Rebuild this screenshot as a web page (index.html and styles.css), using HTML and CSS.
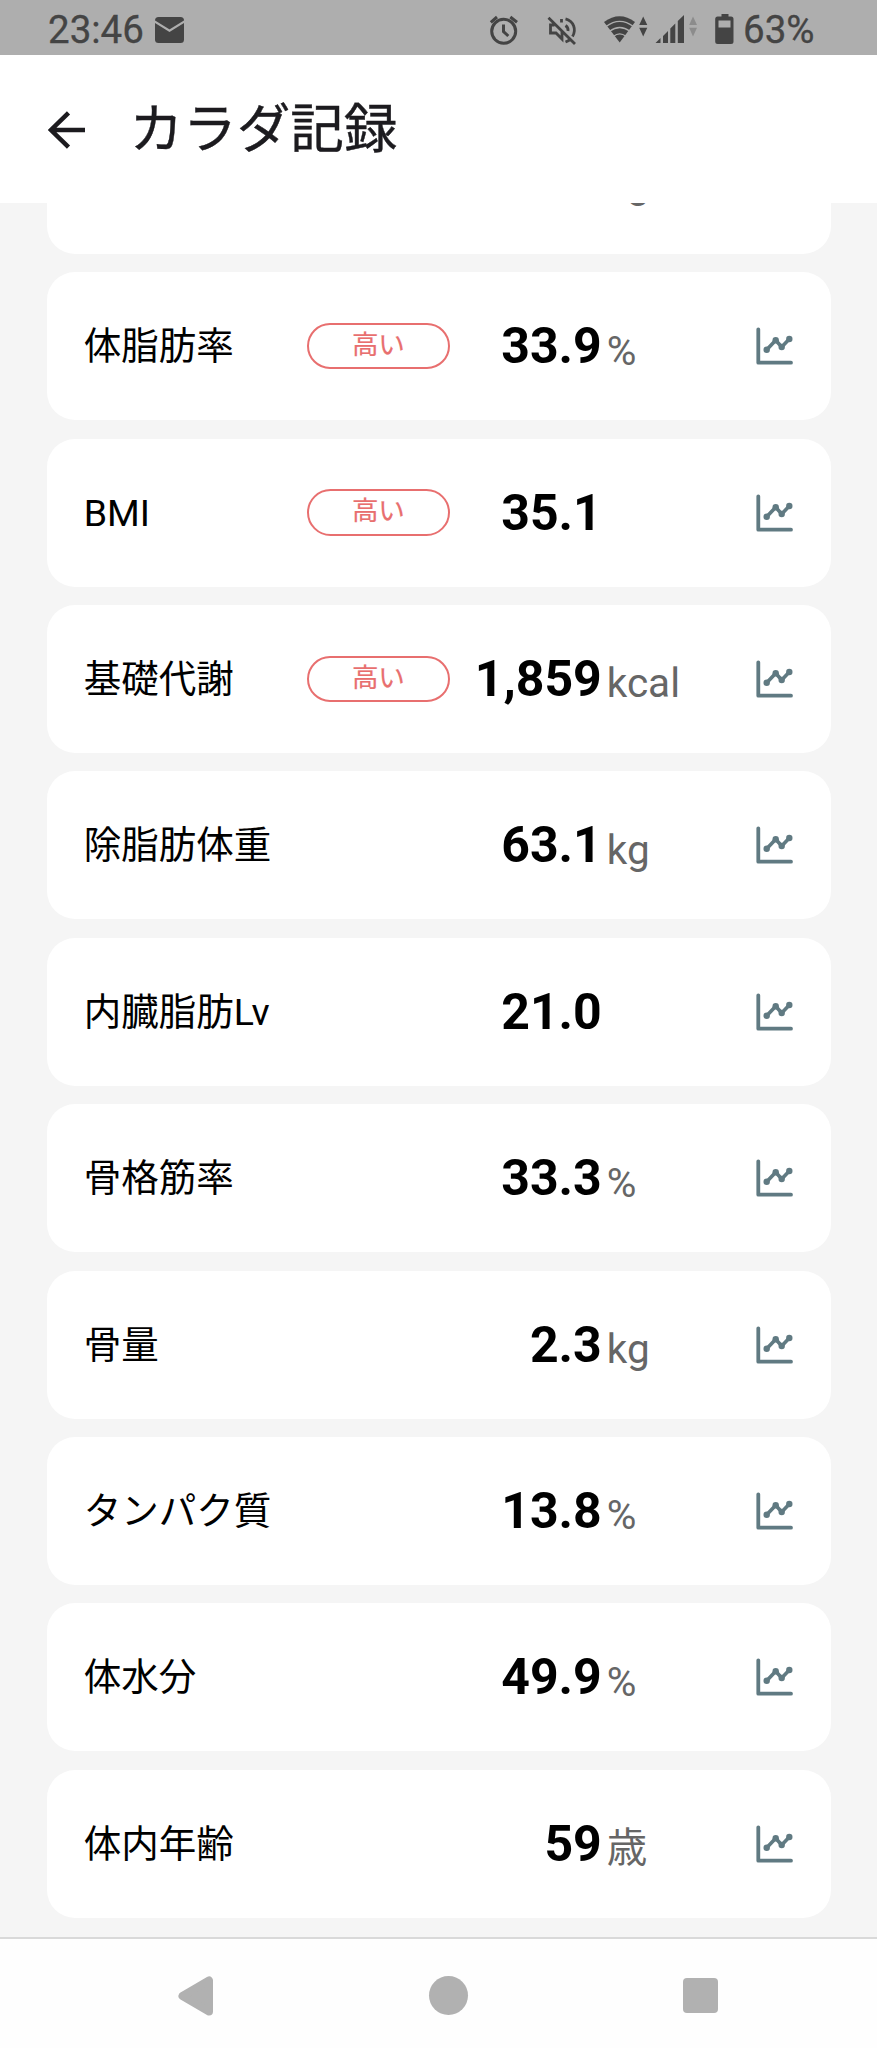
FILE: index.html
```html
<!DOCTYPE html>
<html lang="ja">
<head>
<meta charset="utf-8">
<title>カラダ記録</title>
<link rel="stylesheet" href="styles.css">
</head>
<body>
<svg class="defs" width="0" height="0" aria-hidden="true">
  <symbol id="chart" viewBox="0 0 38 38">
    <g fill="none" stroke="currentColor" stroke-linecap="round" stroke-linejoin="round">
      <path stroke-width="3.8" d="M2.300 2.300V35.700H35"/>
      <path stroke-width="3.600" d="M10.700 22.800 19.700 13.200 25.700 20 33.300 12"/>
    </g>
    <g fill="currentColor"><circle cx="10.700" cy="22.800" r="3.200"/><circle cx="19.700" cy="13.200" r="3.200"/><circle cx="25.700" cy="20" r="3.200"/><circle cx="33.300" cy="12" r="3.200"/></g>
  </symbol>
</svg>
<div class="screen">
  <div class="status">
    <span class="clock">23:46</span>
    <svg class="mail" width="29" height="26" viewBox="0 0 29 26"><rect width="29" height="26" rx="3.500" fill="#444"/><path d="M-.5 4.500 14.500 13.700 29.500 4.500" fill="none" stroke="#aeaeae" stroke-width="2.200"/></svg>
    <svg class="tray" width="246" height="34" viewBox="0 0 246 34" fill="#444">
      <g fill="none" stroke="#444" stroke-width="3">
        <circle cx="15.700" cy="18.300" r="12"/>
        <path d="M15.500 11.500V18.500L20.300 23M2.800 9.300 9 4M22.300 4 29 9.300"/>
        <path stroke-width="2.800" d="M60.500 4.800 87 31M66.500 12H62.500V20H68L74 26V18.500M73.500 6V9.500M77.500 12.500Q80.500 14.500 80 18M77.500 5.800C86 8 88.500 17 84.500 23.500M77.500 29Q80 28 81.500 27"/>
      </g>
      <g>
        <path d="M116 9Q131.700-2.500 147 9L131.700 29.500Z"/>
        <g fill="none" stroke="#aeaeae" stroke-width="1.300"><path d="M118 13.600Q131.700 3 145.500 13.600M121.500 18.300Q131.700 10.700 142 18.300M125.500 23.200Q131.700 18.400 138 23.200"/></g>
        <path d="M151.200 12 155.200 3.500 159.300 12ZM151.200 14.800H159.300L155.200 23.500Z"/>
        <path d="M167.500 30 172.500 25V30ZM175 23 180 18V30H175ZM182.300 15.500 187.300 10.500V30H182.300ZM189.800 8 196 2V30H189.800Z"/>
        <path fill="#8c8c8c" d="M201.200 12 205 3.500 209 12ZM201.200 14.800H209L205 23.500Z"/>
      </g>
      <path fill-rule="evenodd" d="M233.500 1H240.500V3.500H243Q245.500 3.500 245.500 6V28.500Q245.500 31 243 31H229.700Q227.200 31 227.200 28.500V6Q227.200 3.500 229.700 3.500H233.500ZM230.500 7.500V14.500H242.500V7.500Z"/>
    </svg>
    <span class="battery">63%</span>
  </div>
  <header class="bar">
    <svg class="back" width="38" height="38" viewBox="0 0 38 38" fill="none" stroke="#1c1b1f" stroke-width="4.500"><path d="M37 19H3M20.500 1.800 3 19 20.500 36.200"/></svg>
    <h1 class="title">カラダ記録</h1>
  </header>
  <main class="list">
    <section class="card"><span class="name"></span><span></span><span class="value"></span><span class="unit">kg</span></section>
    <section class="card"><span class="name">体脂肪率</span><span class="tag">高い</span><span class="value">33.9</span><span class="unit">%</span><svg class="chart"><use href="#chart"/></svg></section>
    <section class="card"><span class="name">BMI</span><span class="tag">高い</span><span class="value">35.1</span><span class="unit"></span><svg class="chart"><use href="#chart"/></svg></section>
    <section class="card"><span class="name">基礎代謝</span><span class="tag">高い</span><span class="value">1,859</span><span class="unit">kcal</span><svg class="chart"><use href="#chart"/></svg></section>
    <section class="card"><span class="name">除脂肪体重</span><span></span><span class="value">63.1</span><span class="unit">kg</span><svg class="chart"><use href="#chart"/></svg></section>
    <section class="card"><span class="name">内臓脂肪Lv</span><span></span><span class="value">21.0</span><span class="unit"></span><svg class="chart"><use href="#chart"/></svg></section>
    <section class="card"><span class="name">骨格筋率</span><span></span><span class="value">33.3</span><span class="unit">%</span><svg class="chart"><use href="#chart"/></svg></section>
    <section class="card"><span class="name">骨量</span><span></span><span class="value">2.3</span><span class="unit">kg</span><svg class="chart"><use href="#chart"/></svg></section>
    <section class="card"><span class="name">タンパク質</span><span></span><span class="value">13.8</span><span class="unit">%</span><svg class="chart"><use href="#chart"/></svg></section>
    <section class="card"><span class="name">体水分</span><span></span><span class="value">49.9</span><span class="unit">%</span><svg class="chart"><use href="#chart"/></svg></section>
    <section class="card"><span class="name">体内年齢</span><span></span><span class="value">59</span><span class="unit">歳</span><svg class="chart"><use href="#chart"/></svg></section>
  </main>
  <nav class="nav">
    <svg width="36" height="40" viewBox="0 0 36 40"><path d="M4.500 20 31 4.500V35.500Z" fill="#b1b1b1" stroke="#b1b1b1" stroke-width="8" stroke-linejoin="round"/></svg>
    <span class="home"></span>
    <span class="recent"></span>
  </nav>
</div>
</body>
</html>
```
FILE: styles.css
```css
* { box-sizing: border-box; }
body { margin: 0; font-family: Roboto, "Noto Sans CJK JP", sans-serif; }
.defs { display: block; height: 0; }
.screen { width: 877px; height: 2048px; display: flex; flex-direction: column; overflow: hidden; background: #fff; }
.status { height: 55px; flex: none; background: #aeaeae; color: #444; display: flex; align-items: flex-start; font-size: 38.500px; line-height: 59px; padding-left: 48px; -webkit-text-stroke: 0.300px #444; }
.clock { width: 107px; }
.mail { margin-top: 17px; }
.tray { margin: 13px 0 0 304px; }
.battery { margin-left: 9px; }
.bar { height: 148px; flex: none; background: #fff; display: flex; align-items: center; padding: 0 0 0 48px; }
.back { margin-top: 2px; }
.title { margin: 2px 0 0 43.500px; font-size: 53.600px; font-weight: 400; line-height: 78px; color: #1c1b1f; -webkit-text-stroke: 0.400px #1c1b1f; }
.list { height: 1734px; flex: none; overflow: hidden; background: #f5f5f5; padding: 0 46px 19.300px 46.500px; display: flex; flex-direction: column; gap: 18.400px; justify-content: flex-end; }
.card { height: 148px; flex: none; background: #fff; border-radius: 28px; padding-left: 37.200px; display: grid; grid-template-columns: 223px 143.400px 151.700px 154.200px 38px; align-items: center; white-space: nowrap; }
.name { font-size: 37.500px; line-height: 54px; color: #000; }
.tag { height: 46.500px; border: 2px solid #e86f6f; border-radius: 24px; color: #e86f6f; font-size: 26.500px; line-height: 40px; text-align: center; -webkit-text-stroke: 0.200px #e86f6f; }
.value { font-size: 50px; font-weight: 700; line-height: 60px; text-align: right; color: #000; }
.unit { font-size: 40.500px; line-height: 60px; padding: 9px 0 0 5px; color: #666; }
.chart { width: 38px; height: 38px; color: #607a82; }
.nav { height: 111px; flex: none; border-top: 2px solid #d9d9d9; background: #fefefe; display: flex; align-items: center; padding: 4px 0 0 178px; }
.home { width: 39px; height: 39px; border-radius: 50%; background: #b1b1b1; margin-left: 215px; }
.recent { width: 35px; height: 35px; border-radius: 4px; background: #b1b1b1; margin-left: 215px; }
```
